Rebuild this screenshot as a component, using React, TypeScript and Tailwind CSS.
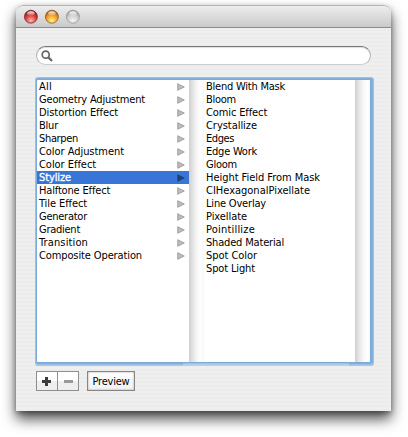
import React from 'react';

type Item = { label: string; width: number };

const categories: Item[] = [
  { label: 'All', width: 13 },
  { label: 'Geometry Adjustment', width: 106 },
  { label: 'Distortion Effect', width: 79 },
  { label: 'Blur', width: 19 },
  { label: 'Sharpen', width: 39 },
  { label: 'Color Adjustment', width: 85 },
  { label: 'Color Effect', width: 57 },
  { label: 'Stylize', width: 32 },
  { label: 'Halftone Effect', width: 71 },
  { label: 'Tile Effect', width: 48 },
  { label: 'Generator', width: 48 },
  { label: 'Gradient', width: 41 },
  { label: 'Transition', width: 49 },
  { label: 'Composite Operation', width: 103 },
];

const filters: Item[] = [
  { label: 'Blend With Mask', width: 79 },
  { label: 'Bloom', width: 30 },
  { label: 'Comic Effect', width: 61 },
  { label: 'Crystallize', width: 51 },
  { label: 'Edges', width: 28 },
  { label: 'Edge Work', width: 51 },
  { label: 'Gloom', width: 31 },
  { label: 'Height Field From Mask', width: 114 },
  { label: 'CIHexagonalPixellate', width: 104 },
  { label: 'Line Overlay', width: 60 },
  { label: 'Pixellate', width: 41 },
  { label: 'Pointillize', width: 49 },
  { label: 'Shaded Material', width: 78 },
  { label: 'Spot Color', width: 51 },
  { label: 'Spot Light', width: 49 },
];

function Label({ label, width }: Item) {
  const ref = React.useRef<HTMLSpanElement>(null);
  const [spacing, setSpacing] = React.useState(0);
  React.useLayoutEffect(() => {
    if (ref.current) {
      setSpacing((width - ref.current.getBoundingClientRect().width) / label.length);
    }
  }, [label, width]);
  return (
    <span ref={ref} className="whitespace-pre" style={{ letterSpacing: `${spacing}px` }}>
      {label}
    </span>
  );
}

function Light({ kind }: { kind: 'red' | 'amber' | 'gray' }) {
  const c = {
    red: ['#ffb5a8', '#d63a3a', '#7a1a1c'],
    amber: ['#fff68a', '#f39a22', '#8f4c14'],
    gray: ['#f4f4f4', '#cfcfcf', '#8e8e8e'],
  }[kind];
  return (
    <svg width="15" height="15" viewBox="0 0 15 15">
      <defs>
        <radialGradient id={kind} cx=".5" cy=".8" r=".8">
          <stop offset="0" stopColor={c[0]} />
          <stop offset=".55" stopColor={c[1]} />
          <stop offset="1" stopColor={c[2]} />
        </radialGradient>
        <linearGradient id={`${kind}-gloss`} x1="0" y1="0" x2="0" y2="1">
          <stop offset="0" stopColor="#fff" stopOpacity=".9" />
          <stop offset="1" stopColor="#fff" stopOpacity=".15" />
        </linearGradient>
      </defs>
      <circle cx="7.9" cy="7.7" r="6.5" fill={`url(#${kind})`} stroke={c[2]} strokeOpacity=".7" />
      <ellipse cx="7.9" cy="4.4" rx="3.7" ry="2.1" fill={`url(#${kind}-gloss)`} />
    </svg>
  );
}

function Track() {
  return (
    <div className="w-[15px] shrink-0 bg-[linear-gradient(90deg,#cfcfcf,#e6e6e6_28%,#f8f8f8_55%,#ffffff_80%,#f7f7f7)]" />
  );
}

export default function App() {
  return (
    <div className="h-[437px] w-[408px] overflow-hidden bg-white pt-[5px] pl-4 font-['DejaVu_Sans_Condensed','DejaVu_Sans',sans-serif] text-[11px] leading-[13px] text-black [font-stretch:condensed]">
      <div className="flex h-[406px] w-[375px] flex-col overflow-hidden rounded-t-[7px] bg-[repeating-linear-gradient(180deg,#ececec_0_2px,#efefef_2px_4px)] shadow-[0_8px_14px_rgba(0,0,0,0.7),0_2px_5px_rgba(0,0,0,0.3)]">
        <div className="flex h-[23px] shrink-0 items-center gap-[6px] rounded-t-[7px] border-t border-b border-t-[#b5b5b5] border-b-[#8b8b8b] bg-linear-to-b from-[#ededed] to-[#cacaca] pl-[7px]">
          <Light kind="red" />
          <Light kind="amber" />
          <Light kind="gray" />
        </div>

        <div className="mt-[18px] ml-5 flex h-[19px] w-[335px] shrink-0 items-center rounded-full border border-[#b6b6b6] border-t-[#777] border-b-[#cdcdcd] bg-white pl-1 shadow-[inset_0_1px_1px_#ddd]">
          <svg width="12" height="12" viewBox="0 0 12 12" fill="none" stroke="#666">
            <circle cx="4.7" cy="4.7" r="3.5" strokeWidth="1.7" />
            <path d="M7.4 7.4L11 11" strokeWidth="2.2" />
          </svg>
        </div>

        <div className="mt-[15px] ml-[21px] flex h-[282px] w-[333px] shrink-0 rounded-[1px] bg-white shadow-[0_0_0_1px_#7aaad8,1px_0_0_2px_#82b0dc,1px_0_0_3px_#9bc0e2,1px_1px_0_3px_#a9c8e4]">
          <div className="w-[152px]">
            {categories.map((c) => {
              const selected = c.label === 'Stylize';
              return (
                <div
                  key={c.label}
                  className={
                    selected
                      ? 'flex h-[13px] items-center justify-between bg-[#3875d7] pr-1 pl-[2px] text-white [-webkit-text-stroke:0.3px_white]'
                      : 'flex h-[13px] items-center justify-between pr-1 pl-[2px]'
                  }
                >
                  <Label {...c} />
                  <svg width="8" height="8" viewBox="0 0 8 8">
                    <path
                      d="M.7 .7L7.3 4L.7 7.3Z"
                      fill={selected ? '#1e3f78' : '#bdbdbd'}
                      stroke={selected ? '#1e3f78' : '#8d8d8d'}
                      strokeWidth=".7"
                    />
                  </svg>
                </div>
              );
            })}
          </div>
          <Track />
          <div className="w-[151px] pl-[2px]">
            {filters.map((f) => (
              <div key={f.label} className="flex h-[13px] items-center">
                <Label {...f} />
              </div>
            ))}
          </div>
          <Track />
        </div>

        {/* The focus ring fades along the middle of its bottom edge. */}
        <div className="mt-px ml-[167px] h-[3px] w-[166px] shrink-0 bg-linear-to-b from-[#9fbfdf] to-[#c3d6ea]" />

        <div className="mt-[5px] ml-5 flex h-5 shrink-0 gap-2">
          <div className="flex w-[43px] border border-[#8e8e8e] bg-linear-to-b from-white from-50% to-[#eeeeee] to-50%">
            <div className="flex w-[21px] items-center justify-center border-r border-[#8e8e8e] pr-px">
              <svg width="9" height="9" viewBox="0 0 9 9">
                <path d="M4.5 0V9M0 4.5H9" stroke="#3c3c3c" strokeWidth="3" />
              </svg>
            </div>
            <div className="flex w-5 items-center justify-center">
              <div className="h-[3px] w-[9px] bg-[#999]" />
            </div>
          </div>
          <div className="flex w-12 items-center justify-center border border-[#858585] bg-linear-to-b from-white to-[#f1f1f1] shadow-[inset_0_0_2px_#999]">
            <Label label="Preview" width={37} />
          </div>
        </div>
      </div>
    </div>
  );
}
